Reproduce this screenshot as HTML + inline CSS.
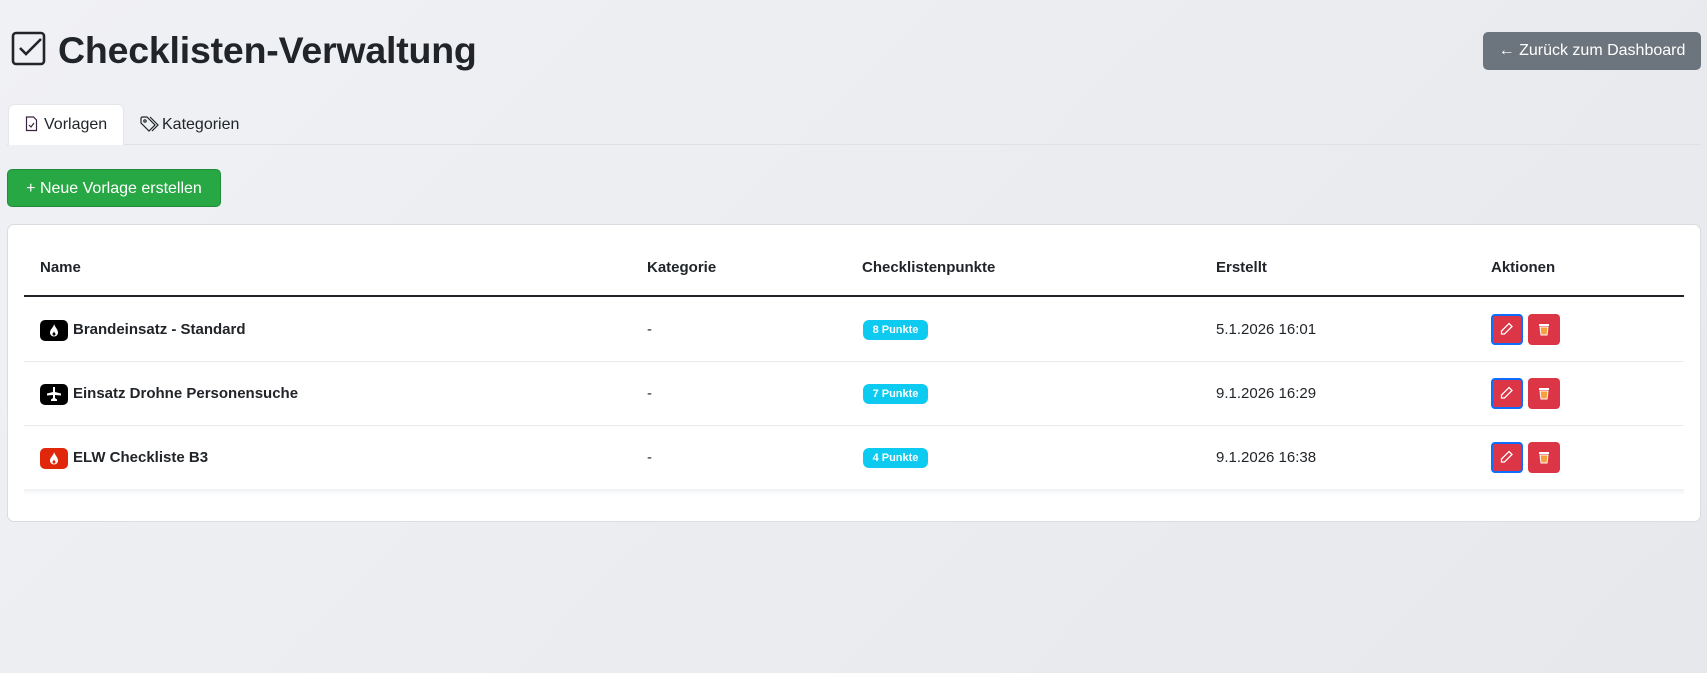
<!DOCTYPE html>
<html><head><meta charset="utf-8">
<style>
*{box-sizing:border-box;margin:0;padding:0}
body{width:1707px;height:673px;overflow:hidden;font-family:"Liberation Sans",sans-serif;color:#212529;background:linear-gradient(135deg,#f0f1f4,#e6e8ec);position:relative;font-size:16px}
.abs{position:absolute}
h1{position:absolute;left:58px;top:29px;font-size:37.5px;font-weight:bold;letter-spacing:-0.2px;color:#212529}
.back{left:1483px;top:32px;width:218px;height:38px;background:#6c757d;color:#fff;border-radius:5px;font-size:16px;line-height:38px;text-align:center}
.tabline{left:7px;top:144px;width:1694px;height:1px;background:#dee2e6}
.tab{left:8px;top:104px;width:116px;height:41px;background:#fff;border-radius:6px 6px 0 0;border:1px solid #e3e6ea;border-bottom:none}
.green{left:7px;top:169px;width:214px;height:38px;background:#28a745;border-radius:5px;color:#fff;font-size:16px;line-height:37px;text-align:center;border:1px solid #1e8e3a}
.card{left:7px;top:224px;width:1694px;height:298px;background:#fff;border:1px solid #d9dce0;border-radius:7px}
.th{top:259px;font-weight:bold;font-size:15px}
.hl{left:24px;top:295px;width:1660px;height:2px;background:#212529}
.sep{left:24px;width:1660px;height:1px;background:#e9ecef}
.name{font-weight:bold;font-size:15px}
.ic{left:40px;width:28px;height:21px;border-radius:5px;background:#000}
.badge{left:863px;width:65px;height:20px;border-radius:6px;background:#0dcaf0;color:#fff;font-size:11px;font-weight:bold;text-align:center;line-height:20px}
.btn{width:32px;height:31px;border-radius:4px;background:#dc3545}
.ed{border:2px solid #0d6efd;left:1491px}
.dl{left:1528px}
.txt{font-size:15px}
</style></head><body>
<svg class="abs" style="left:11px;top:31px" width="36" height="36" viewBox="0 0 36 36" fill="none" stroke="#212529" stroke-width="2.6"><rect x="2" y="2" width="31" height="31" rx="3"/><path d="M9 17l6 6L30 8"/></svg>
<h1>Checklisten-Verwaltung</h1>
<div class="abs back">← Zurück zum Dashboard</div>
<div class="abs tabline"></div>
<div class="abs tab"></div>
<svg class="abs" style="left:25px;top:116px" width="13" height="16" viewBox="0 0 13 16" fill="none" stroke="#3a2340" stroke-width="1.2"><path d="M1.5 1h7l3 3v10.5h-10z"/><path d="M4 9l2 2 3-4"/></svg>
<div class="abs" style="left:44px;top:116px;font-size:16px">Vorlagen</div>
<svg class="abs" style="left:140px;top:116px" width="19" height="16" viewBox="0 0 19 16" fill="none" stroke="#212529" stroke-width="1.2"><path d="M1 2v5l8 8 6-6-8-8H2z"/><circle cx="5" cy="5" r="1.2"/><path d="M10 1l8 8-6 6"/></svg>
<div class="abs" style="left:162px;top:116px;font-size:16px">Kategorien</div>
<div class="abs green">+ Neue Vorlage erstellen</div>
<div class="abs card"></div>
<div class="abs th" style="left:40px">Name</div>
<div class="abs th" style="left:647px">Kategorie</div>
<div class="abs th" style="left:862px">Checklistenpunkte</div>
<div class="abs th" style="left:1216px">Erstellt</div>
<div class="abs th" style="left:1491px">Aktionen</div>
<div class="abs hl"></div>
<div class="abs sep" style="top:361px"></div>
<div class="abs sep" style="top:425px"></div>
<div class="abs" style="left:24px;top:489px;width:1660px;height:6px;background:linear-gradient(#eef0f2,#fff)"></div>

<svg width="0" height="0" style="position:absolute"><defs>
<g id="flame"><path d="M6 1C6 4 2 6 2 9.5 2 12 4 13.5 6 13.5S10 12 10 9.5C10 6.5 7.5 5 6 1z" fill="#fff"/><path d="M6 8c0 1.5-1.5 2-1.5 3.2C4.5 12 5.2 12.5 6 12.5s1.5-.5 1.5-1.3C7.5 10 6 9.5 6 8z" fill="currentColor"/></g>
<g id="pen"><path d="M9 1.5l3 3-7.5 7.5H1.5V9z" fill="none" stroke="#fff" stroke-width="1.3"/></g>
<g id="bin"><rect x="2" y="2" width="10" height="2" fill="#fff"/><path d="M3 5h8l-1 8H4z" fill="#f8a03a" stroke="#fff" stroke-width="1"/></g>
</defs></svg>

<div class="abs ic" style="top:320px"></div><svg class="abs" style="left:48px;top:323px;color:#000" width="12" height="15"><use href="#flame"/></svg>
<div class="abs name" style="left:73px;top:321px">Brandeinsatz - Standard</div>
<div class="abs ic" style="top:384px"></div><svg class="abs" style="left:47px;top:387px" width="14" height="14" viewBox="0 0 14 14" fill="#fff"><path d="M6 0h2v5l6 1.5v2L8 8v3l2 1.5V14H4v-1.5L6 11V8L0 8.5v-2L6 5z"/></svg>
<div class="abs name" style="left:73px;top:385px">Einsatz Drohne Personensuche</div>
<div class="abs ic" style="top:448px;background:#e0260b"></div><svg class="abs" style="left:48px;top:451px;color:#e0260b" width="12" height="15"><use href="#flame"/></svg>
<div class="abs name" style="left:73px;top:449px">ELW Checkliste B3</div>

<div class="abs txt" style="left:647px;top:321px">-</div>
<div class="abs txt" style="left:647px;top:385px">-</div>
<div class="abs txt" style="left:647px;top:449px">-</div>
<div class="abs badge" style="top:320px">8 Punkte</div>
<div class="abs badge" style="top:384px">7 Punkte</div>
<div class="abs badge" style="top:448px">4 Punkte</div>
<div class="abs txt" style="left:1216px;top:321px">5.1.2026 16:01</div>
<div class="abs txt" style="left:1216px;top:385px">9.1.2026 16:29</div>
<div class="abs txt" style="left:1216px;top:449px">9.1.2026 16:38</div>

<div class="abs btn ed" style="top:314px"></div><div class="abs btn dl" style="top:314px"></div>
<div class="abs btn ed" style="top:378px"></div><div class="abs btn dl" style="top:378px"></div>
<div class="abs btn ed" style="top:442px"></div><div class="abs btn dl" style="top:442px"></div>
<svg class="abs" style="left:1500px;top:322px" width="14" height="14"><use href="#pen"/></svg>
<svg class="abs" style="left:1537px;top:322px" width="14" height="14"><use href="#bin"/></svg>
<svg class="abs" style="left:1500px;top:386px" width="14" height="14"><use href="#pen"/></svg>
<svg class="abs" style="left:1537px;top:386px" width="14" height="14"><use href="#bin"/></svg>
<svg class="abs" style="left:1500px;top:450px" width="14" height="14"><use href="#pen"/></svg>
<svg class="abs" style="left:1537px;top:450px" width="14" height="14"><use href="#bin"/></svg>
</body></html>
